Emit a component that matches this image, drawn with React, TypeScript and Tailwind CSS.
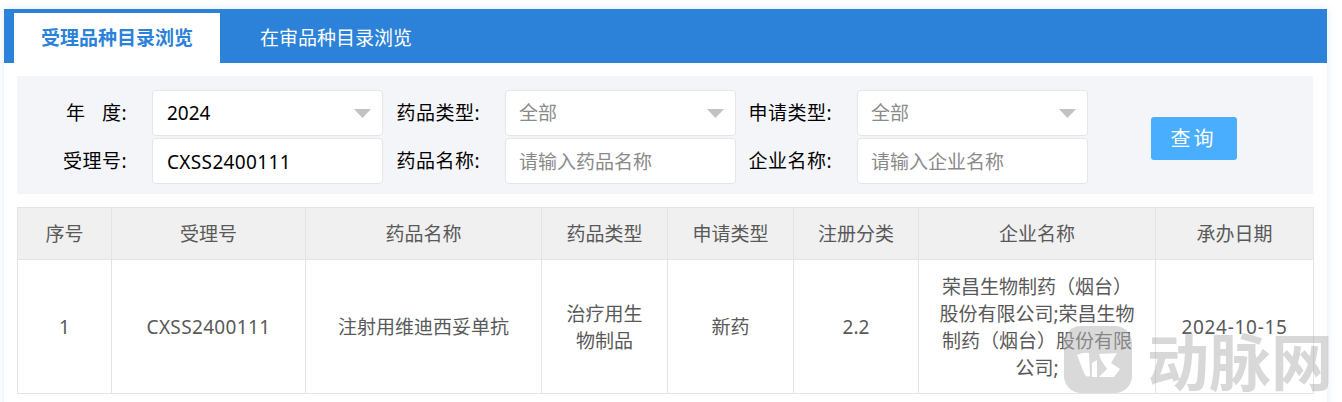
const font = { fontFamily: '"Noto Sans", "Noto Sans CJK SC", sans-serif' };

const columns = [
  { title: '序号', width: 94 },
  { title: '受理号', width: 194 },
  { title: '药品名称', width: 236 },
  { title: '药品类型', width: 126 },
  { title: '申请类型', width: 126 },
  { title: '注册分类', width: 125 },
  { title: '企业名称', width: 237 },
  { title: '承办日期', width: 158 },
];

const row = [
  { text: '1' },
  { text: 'CXSS2400111', className: 'tracking-[0.35px]' },
  { text: '注射用维迪西妥单抗' },
  { text: '治疗用生物制品' },
  { text: '新药' },
  { text: '2.2' },
  { text: '荣昌生物制药（烟台）股份有限公司;荣昌生物制药（烟台）股份有限公司;' },
  { text: '2024-10-15', className: 'tracking-[0.7px]' },
];

function Label({ children }: { children: React.ReactNode }) {
  return <label className="pr-[25px] text-right text-[19px] tracking-[0.5px] text-black whitespace-pre">{children}</label>;
}

function SelectBox({ value, muted }: { value: string; muted?: boolean }) {
  return (
    <div className={`h-[46px] flex items-center justify-between rounded border border-[#e6e6ea] bg-white pr-[11px] ${muted ? 'pl-[13px]' : 'pl-[14px]'}`}>
      <span className={muted ? 'text-[19px] text-[#8a8a8a]' : 'text-[19px] text-black'}>{value}</span>
      <svg width="17" height="9" viewBox="0 0 17 9">
        <path d="M0 0H17L8.5 9Z" fill="#c2c2c2" />
      </svg>
    </div>
  );
}

function TextBox({ value, placeholder }: { value?: string; placeholder?: string }) {
  return (
    <input
      readOnly
      value={value ?? ''}
      placeholder={placeholder}
      className={`h-[46px] w-full rounded border border-[#e6e6ea] bg-white pt-[2px] text-[19px] text-black outline-none placeholder:text-[#8a8a8a] ${
        value ? 'pl-[14px] tracking-[0.35px]' : 'pl-[13px]'
      }`}
    />
  );
}

// faint site watermark sitting over the bottom right of the table
function Watermark() {
  return (
    <div className="absolute left-[1064px] top-[326px] flex items-start pointer-events-none">
      <svg width="68" height="67" viewBox="0 0 68 67">
        <rect width="68" height="67" rx="17" fill="#b4b4b4" fillOpacity="0.5" />
        <path d="M13 29Q19 26 25 27L26 50Q22 52 20 47Z" fill="#fff" />
        <path d="M28 37L33 34L33 51L28 51Z" fill="#fff" />
        <path d="M35 28L53 27L47 37L56 43L50 51L35 51L43 43L37 34Z" fill="#fff" />
      </svg>
      <span className="ml-[15px] -mt-[2px] text-[62px] leading-[76px] font-bold text-[#a8a8a8]/45 whitespace-nowrap">
        动脉网
      </span>
    </div>
  );
}

export default function App() {
  return (
    <div className="relative h-[402px] w-[1342px] overflow-hidden bg-white pt-[9px] pl-[4px]" style={font}>
      <div className="w-[1323px] h-[420px] bg-white shadow-[0_0_8px_rgba(90,120,190,0.18)]">
        {/* Tabs */}
        <div className="flex items-end h-[54px] bg-[#2b82d8] pl-[10px]">
          <div className="flex items-center justify-center h-[50px] w-[206px] bg-white pt-[1px] text-[19px] font-bold text-[#2b82d8]">
            受理品种目录浏览
          </div>
          <div className="flex items-center h-[50px] pl-[40px] pt-[1px] text-[19px] text-white">在审品种目录浏览</div>
        </div>

        <div className="pt-[13px] pl-[13px] pr-[14px]">
          {/* Filters */}
          <div className="grid grid-cols-[135px_231px_122px_231px_121px_231px_1fr] items-center gap-y-[2px] h-[118px] content-center bg-[#f4f5f9] pt-[4px]">
            <Label>{'年   度:'}</Label>
            <SelectBox value="2024" />
            <Label>药品类型:</Label>
            <SelectBox value="全部" muted />
            <Label>申请类型:</Label>
            <SelectBox value="全部" muted />
            <div className="row-span-2 flex justify-center pr-[14px] pt-[2px]">
              <button className="h-[43px] w-[86px] rounded-[3px] bg-[#4aaeff] pt-[1px] text-[20px] tracking-[3px] text-white">查询</button>
            </div>
            <Label>受理号:</Label>
            <TextBox value="CXSS2400111" />
            <Label>药品名称:</Label>
            <TextBox placeholder="请输入药品名称" />
            <Label>企业名称:</Label>
            <TextBox placeholder="请输入企业名称" />
          </div>

          {/* Results */}
          <table className="mt-[13px] w-[1296px] table-fixed border-collapse text-[19px] text-[#595959]">
            <colgroup>
              {columns.map((c) => (
                <col key={c.title} style={{ width: c.width }} />
              ))}
            </colgroup>
            <thead>
              <tr className="h-[52px] bg-[#f0f0f0]">
                {columns.map((c) => (
                  <th key={c.title} className="border border-[#e4e4e4] pt-[1px] font-normal">
                    {c.title}
                  </th>
                ))}
              </tr>
            </thead>
            <tbody>
              <tr className="h-[134px]">
                {row.map((cell, i) => (
                  <td key={i} className={`border border-[#e4e4e4] px-[20px] pt-[2px] text-center leading-[27px] break-all ${cell.className ?? ''}`}>
                    {cell.text}
                  </td>
                ))}
              </tr>
            </tbody>
          </table>
        </div>
      </div>
      <Watermark />
    </div>
  );
}
